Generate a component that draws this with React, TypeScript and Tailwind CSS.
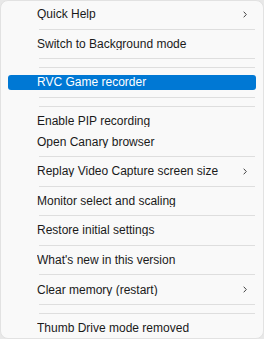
import { ReactNode } from "react";

type Entry =
  | { kind: "item"; label: string; submenu?: boolean; active?: boolean }
  | { kind: "sep" };

const entries: Entry[] = [
  { kind: "item", label: "Quick Help", submenu: true },
  { kind: "sep" },
  { kind: "item", label: "Switch to Background mode" },
  { kind: "sep" },
  { kind: "sep" },
  { kind: "item", label: "RVC Game recorder", active: true },
  { kind: "sep" },
  { kind: "sep" },
  { kind: "item", label: "Enable PIP recording" },
  { kind: "item", label: "Open Canary browser" },
  { kind: "sep" },
  { kind: "item", label: "Replay Video Capture screen size", submenu: true },
  { kind: "sep" },
  { kind: "item", label: "Monitor select and scaling" },
  { kind: "sep" },
  { kind: "item", label: "Restore initial settings" },
  { kind: "sep" },
  { kind: "item", label: "What's new in this version" },
  { kind: "sep" },
  { kind: "item", label: "Clear memory (restart)", submenu: true },
  { kind: "sep" },
  { kind: "sep" },
  { kind: "item", label: "Thumb Drive mode removed" },
];

function Chevron() {
  return (
    <svg width="4" height="7" viewBox="0 0 4 7" fill="none" className="text-[#444]">
      <path d="M0.7 0.7l2.6 2.8-2.6 2.8" stroke="currentColor" strokeWidth="1" />
    </svg>
  );
}

function MenuItem({ label, submenu, active }: { label: string; submenu?: boolean; active?: boolean }) {
  let content: ReactNode = (
    <>
      <span className="flex-1 truncate">{label}</span>
      {submenu && (
        <span className="mr-[9px] flex items-center">
          <Chevron />
        </span>
      )}
    </>
  );
  return (
    <div className="h-[20.6px] flex items-center px-[7px]">
      <div
        className={`h-[15px] flex-1 flex items-center rounded-[3px] pl-[29px] ${
          active ? "bg-[#0078d4] text-white" : "text-[#1a1a1a]"
        }`}
      >
        {content}
      </div>
    </div>
  );
}

export default function App() {
  return (
    <div className="w-[264px] h-[339px] bg-[#e8e8e8]">
      <div
        className="w-full h-full bg-[#f9f9f9] border border-[#e2e2e2] rounded-[8px] pt-[3px] text-[12px] leading-none"
        style={{ fontFamily: '"Segoe UI", "Liberation Sans", Arial, sans-serif' }}
      >
        {entries.map((e, i) =>
          e.kind === "sep" ? (
            <div key={i} className="h-[9px] flex items-center pl-[38px] pr-[8px]">
              <div className="h-px flex-1 bg-[#dedede]" />
            </div>
          ) : (
            <MenuItem key={i} label={e.label} submenu={e.submenu} active={e.active} />
          )
        )}
      </div>
    </div>
  );
}
